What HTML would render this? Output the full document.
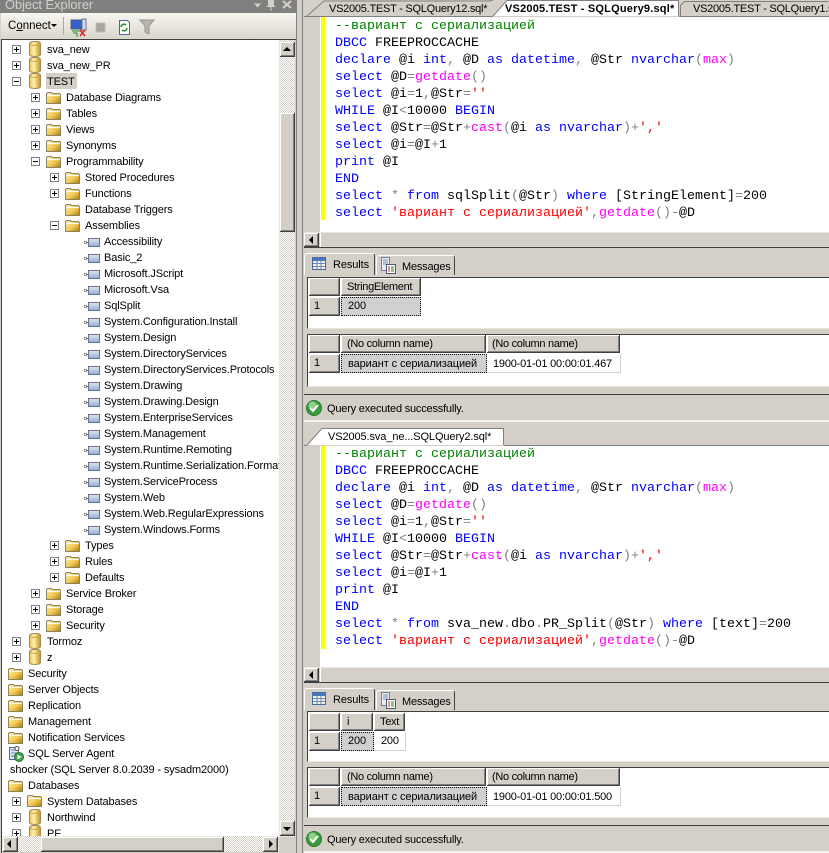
<!DOCTYPE html>
<html><head><meta charset="utf-8"><title>Object Explorer</title>
<style>
html,body{margin:0;padding:0;width:829px;height:853px;overflow:hidden;background:#d4d0c8}
body{position:relative;font:11px/16px "Liberation Sans","Noto Sans CJK SC",sans-serif;color:#000}
.a,.r,.r>*,.l,.b{position:absolute;display:block}
.b{background:#d4d0c8;box-shadow:inset -1px -1px #404040,inset 1px 1px #fff,inset -2px -2px #808080;white-space:nowrap;overflow:hidden}
.d{position:absolute;background:repeating-conic-gradient(#d4d0c8 0 25%,#fff 0 50%) 0 0/2px 2px}
#tree{position:absolute;left:0;top:0;width:279px;height:836px;background:#fff;clip-path:inset(40px 0 0 2px);overflow:hidden}
.r{height:16px;white-space:nowrap;width:0}
.r svg{left:15px;top:0;width:16px;height:16px}
.w svg,.y svg,.u svg,.z svg{top:1px}
.r span{left:35px;top:1px;letter-spacing:-.13px}
.r i{left:0;top:4px;width:7px;height:7px;border:1px solid #808080;background:#fff}
.r i:before{content:"";position:absolute;left:1px;top:3px;width:5px;height:1px;background:#000}
.r i.p:after{content:"";position:absolute;left:3px;top:1px;width:1px;height:5px;background:#000}
.u{left:-7px}.v{left:12px}.w{left:31px}.y{left:50px}.z{left:69px}
.l{left:335px;font:13.333px/17px "Liberation Mono","Noto Sans CJK SC",monospace;white-space:pre;height:17px}
.k{color:#00f}.f{color:#f0f}.s{color:#f00}.c{color:#008000}.g{color:#808080}
.tt{position:absolute;white-space:nowrap;top:1px;line-height:16px}
.h{line-height:19px;padding-left:6px;box-sizing:border-box;letter-spacing:-.3px}
.cell{position:absolute;box-sizing:border-box;line-height:19px;padding-left:7px;white-space:nowrap;letter-spacing:-.1px}
.sel{background:#d0d0d0;outline:1px dotted #000;outline-offset:-1px}
.wh{background:#fff;border:1px solid #d4d0c8;border-width:0 1px 1px 0;line-height:20px;letter-spacing:-.2px}
.panel{position:absolute;left:307px;width:522px;background:#fff;border-top:1px solid #404040;border-left:1px solid #404040;border-bottom:1px solid #e8e6e0;box-sizing:border-box}
.tab{position:absolute;white-space:nowrap;box-sizing:border-box;background:#d4d0c8;border:1px solid #fff;border-bottom:0;border-right:1px solid #404040;border-radius:3px 3px 0 0}
.tab span{position:absolute;top:3px;letter-spacing:-.1px}
.tab svg{position:absolute;left:7px;top:3px}
.status{position:absolute;left:304px;width:525px;height:23px;background:#d4d0c8;line-height:23px}
.status span{position:absolute;left:23px;top:1px;letter-spacing:-.2px}
.status svg{position:absolute;left:2px;top:3px}
.tri{position:absolute;width:0;height:0;border-style:solid;border-color:transparent}
</style></head><body>
<svg width="0" height="0" style="position:absolute">
<defs>
<linearGradient id="gf" x1="0" y1="0" x2="1" y2="1"><stop offset="0" stop-color="#fff4b8"/><stop offset=".55" stop-color="#f2c850"/><stop offset="1" stop-color="#a87810"/></linearGradient>
<linearGradient id="gd" x1="0" y1="0" x2="1" y2="0"><stop offset="0" stop-color="#f0c850"/><stop offset=".4" stop-color="#fff0b0"/><stop offset="1" stop-color="#c89020"/></linearGradient>
<linearGradient id="ga" x1="0" y1="0" x2="0" y2="1"><stop offset="0" stop-color="#dde6f5"/><stop offset="1" stop-color="#94aad0"/></linearGradient>
<symbol id="f" viewBox="0 0 16 16"><path d="M.5 13.500V3.500l1-1h4l1 1h7l1 1v9z" fill="url(#gf)" stroke="#8a8460"/><path d="M1 5.500h13" stroke="#fff" /></symbol>
<symbol id="d" viewBox="0 0 16 16"><path d="M2.500 2.500c0-2.600 11-2.600 11 0v11c0 2.600-11 2.600-11 0z" fill="url(#gd)" stroke="#a08a50"/><path d="M3 3.500c2 1.200 8 1.200 10 0" fill="none" stroke="#c8a040"/></symbol>
<symbol id="x" viewBox="0 0 16 16"><path d="M0 8.500h4" stroke="#707070"/><circle cx="1.500" cy="8.500" r="1.300" fill="#fff" stroke="#606060" stroke-width=".7"/><path d="M3.500 8.500l1.500-1.500v3z" fill="#505050"/><rect x="4.500" y="4.500" width="11" height="8" fill="url(#ga)" stroke="#68748c"/></symbol>
<symbol id="ok" viewBox="0 0 16 16"><circle cx="8" cy="8" r="7.500" fill="#3a9a3c" stroke="#2a7a30"/><circle cx="6.500" cy="5.500" r="4" fill="#8ed088"/><path d="M4 8l3 3 5-6" fill="none" stroke="#fff" stroke-width="2"/></symbol>
<symbol id="gr" viewBox="0 0 14 13"><rect x=".5" y=".5" width="13" height="12" fill="#f4f0e0" stroke="#4a6aa0"/><rect x="1" y="1" width="12" height="3" fill="#4a78c0"/><path d="M1 6.500h12M1 9.500h12M5 4v8M9 4v8" stroke="#6a8ac0"/></symbol>
<symbol id="ms" viewBox="0 0 15 17"><rect x=".5" y=".5" width="8" height="13" fill="#e8ecf4" stroke="#7080a0"/><path d="M2 3h5M2 5h5M2 7h5" stroke="#8090b0"/><rect x="5.500" y="7.500" width="9" height="9" fill="#fff" stroke="#505870"/><path d="M7 10h2M7 12h2M7 14h2" stroke="#c03020"/><path d="M10 10h3M10 12h3M10 14h3" stroke="#20803a"/></symbol>
</defs></svg>

<!-- Object Explorer title + toolbar -->
<div class="a" style="left:0;top:0;width:296px;height:13px;background:#808080"></div>
<div class="a" style="left:5px;top:-3px;font-size:12.800px;line-height:16px;color:#d4d0c8;white-space:nowrap">Object Explorer</div>
<svg class="a" style="left:250px;top:0" width="46" height="12"><path d="M4 3.500h7l-3.500 4z" fill="#d4d0c8"/><path d="M18 0h6v5l1.500 2h-4v4h-1V7h-4l1.500-2z" fill="#d4d0c8"/><path d="M33 1l8 7M41 1l-8 7" stroke="#d4d0c8" stroke-width="2"/></svg>
<div class="a" style="left:1px;top:13px;width:295px;height:27px;background:linear-gradient(#f7f6f1,#d8d5ca)"></div>
<div class="a" style="left:8px;top:18px;font-size:11.500px;white-space:nowrap">C<u>o</u>nnect</div>
<div class="tri" style="left:51px;top:24px;border-width:3px 3px 0;border-top-color:#000"></div>
<div class="a" style="left:63px;top:17px;width:1px;height:18px;background:#aaa79c"></div>
<svg class="a" style="left:69px;top:17px" width="90" height="20">
<rect x="2" y="3" width="11" height="9" fill="#3060c8" stroke="#506080"/><rect x="13" y="2" width="4" height="11" fill="#d8dce8" stroke="#607090"/><path d="M3 14h8M4 16h4v4" stroke="#209030" fill="none"/><path d="M11 13l5 6M16 13l-5 6" stroke="#e02020" stroke-width="1.500"/>
<rect x="27" y="6" width="9" height="9" fill="#a8a59c" stroke="#c0bdb4"/>
<path d="M50.500 3.500h8l2 2v12h-10z" fill="#f8f8f8" stroke="#506890"/><path d="M52 10a3 3 0 0 1 5-2M58 11a3 3 0 0 1-5 2" stroke="#209030" fill="none" stroke-width="1.500"/>
<path d="M71 3h14l-5 6v8l-4-2V9z" fill="#b8b5ac" stroke="#989590"/>
</svg>

<!-- Tree -->
<div class="a" style="left:1px;top:39px;width:1px;height:814px;background:#404040"></div>
<div class="a" style="left:1px;top:39px;width:295px;height:1px;background:#404040"></div>
<div id="tree">
<div class="r v" style="top:41px"><i class="p"></i><svg><use href="#d"/></svg><span>sva_new</span></div>
<div class="r v" style="top:57px"><i class="p"></i><svg><use href="#d"/></svg><span>sva_new_PR</span></div>
<div class="a" style="left:46px;top:73px;width:31px;height:16px;background:#d4d0c8"></div>
<div class="r v" style="top:73px"><i></i><svg><use href="#d"/></svg><span>TEST</span></div>
<div class="r w" style="top:89px"><i class="p"></i><svg><use href="#f"/></svg><span>Database Diagrams</span></div>
<div class="r w" style="top:105px"><i class="p"></i><svg><use href="#f"/></svg><span>Tables</span></div>
<div class="r w" style="top:121px"><i class="p"></i><svg><use href="#f"/></svg><span>Views</span></div>
<div class="r w" style="top:137px"><i class="p"></i><svg><use href="#f"/></svg><span>Synonyms</span></div>
<div class="r w" style="top:153px"><i></i><svg><use href="#f"/></svg><span>Programmability</span></div>
<div class="r y" style="top:169px"><i class="p"></i><svg><use href="#f"/></svg><span>Stored Procedures</span></div>
<div class="r y" style="top:185px"><i class="p"></i><svg><use href="#f"/></svg><span>Functions</span></div>
<div class="r y" style="top:201px"><svg><use href="#f"/></svg><span>Database Triggers</span></div>
<div class="r y" style="top:217px"><i></i><svg><use href="#f"/></svg><span>Assemblies</span></div>
<div class="r z" style="top:233px"><svg><use href="#x"/></svg><span>Accessibility</span></div>
<div class="r z" style="top:249px"><svg><use href="#x"/></svg><span>Basic_2</span></div>
<div class="r z" style="top:265px"><svg><use href="#x"/></svg><span>Microsoft.JScript</span></div>
<div class="r z" style="top:281px"><svg><use href="#x"/></svg><span>Microsoft.Vsa</span></div>
<div class="r z" style="top:297px"><svg><use href="#x"/></svg><span>SqlSplit</span></div>
<div class="r z" style="top:313px"><svg><use href="#x"/></svg><span>System.Configuration.Install</span></div>
<div class="r z" style="top:329px"><svg><use href="#x"/></svg><span>System.Design</span></div>
<div class="r z" style="top:345px"><svg><use href="#x"/></svg><span>System.DirectoryServices</span></div>
<div class="r z" style="top:361px"><svg><use href="#x"/></svg><span>System.DirectoryServices.Protocols</span></div>
<div class="r z" style="top:377px"><svg><use href="#x"/></svg><span>System.Drawing</span></div>
<div class="r z" style="top:393px"><svg><use href="#x"/></svg><span>System.Drawing.Design</span></div>
<div class="r z" style="top:409px"><svg><use href="#x"/></svg><span>System.EnterpriseServices</span></div>
<div class="r z" style="top:425px"><svg><use href="#x"/></svg><span>System.Management</span></div>
<div class="r z" style="top:441px"><svg><use href="#x"/></svg><span>System.Runtime.Remoting</span></div>
<div class="r z" style="top:457px"><svg><use href="#x"/></svg><span>System.Runtime.Serialization.Formatters.Soap</span></div>
<div class="r z" style="top:473px"><svg><use href="#x"/></svg><span>System.ServiceProcess</span></div>
<div class="r z" style="top:489px"><svg><use href="#x"/></svg><span>System.Web</span></div>
<div class="r z" style="top:505px"><svg><use href="#x"/></svg><span>System.Web.RegularExpressions</span></div>
<div class="r z" style="top:521px"><svg><use href="#x"/></svg><span>System.Windows.Forms</span></div>
<div class="r y" style="top:537px"><i class="p"></i><svg><use href="#f"/></svg><span>Types</span></div>
<div class="r y" style="top:553px"><i class="p"></i><svg><use href="#f"/></svg><span>Rules</span></div>
<div class="r y" style="top:569px"><i class="p"></i><svg><use href="#f"/></svg><span>Defaults</span></div>
<div class="r w" style="top:585px"><i class="p"></i><svg><use href="#f"/></svg><span>Service Broker</span></div>
<div class="r w" style="top:601px"><i class="p"></i><svg><use href="#f"/></svg><span>Storage</span></div>
<div class="r w" style="top:617px"><i class="p"></i><svg><use href="#f"/></svg><span>Security</span></div>
<div class="r v" style="top:633px"><i class="p"></i><svg><use href="#d"/></svg><span>Tormoz</span></div>
<div class="r v" style="top:649px"><i class="p"></i><svg><use href="#d"/></svg><span>z</span></div>
<div class="r u" style="top:665px"><svg><use href="#f"/></svg><span>Security</span></div>
<div class="r u" style="top:681px"><svg><use href="#f"/></svg><span>Server Objects</span></div>
<div class="r u" style="top:697px"><svg><use href="#f"/></svg><span>Replication</span></div>
<div class="r u" style="top:713px"><svg><use href="#f"/></svg><span>Management</span></div>
<div class="r u" style="top:729px"><svg><use href="#f"/></svg><span>Notification Services</span></div>
<div class="r u" style="top:745px"><svg viewBox="0 0 16 16"><rect x="1.500" y="1.500" width="9" height="12" fill="#dfe6f2" stroke="#506890"/><path d="M3 4h6M3 7h6M3 10h4" stroke="#6080b0"/><circle cx="9" cy="2.500" r="2" fill="#fff" stroke="#505050"/><circle cx="11" cy="11" r="4.500" fill="#40a848" stroke="#207030"/><path d="M9.500 8.500l4 2.500-4 2.500z" fill="#fff"/></svg><span>SQL Server Agent</span></div>
<div class="r" style="left:0;top:761px"><span style="left:10px">shocker (SQL Server 8.0.2039 - sysadm2000)</span></div>
<div class="r u" style="top:777px"><svg><use href="#f"/></svg><span>Databases</span></div>
<div class="r v" style="top:793px"><i class="p"></i><svg><use href="#f"/></svg><span>System Databases</span></div>
<div class="r v" style="top:809px"><i class="p"></i><svg><use href="#d"/></svg><span>Northwind</span></div>
<div class="r v" style="top:825px"><i class="p"></i><svg><use href="#d"/></svg><span>PF</span></div>
</div>

<!-- Tree vertical scrollbar -->
<div class="d" style="left:279px;top:40px;width:16px;height:797px"></div>
<div class="b" style="left:280px;top:42px;width:15px;height:15px"></div>
<div class="tri" style="left:283px;top:47px;border-width:0 4px 4px;border-bottom-color:#000"></div>
<div class="b" style="left:280px;top:113px;width:15px;height:119px"></div>
<div class="b" style="left:280px;top:821px;width:15px;height:15px"></div>
<div class="tri" style="left:283px;top:827px;border-width:4px 4px 0;border-top-color:#000"></div>
<!-- Tree horizontal scrollbar -->
<div class="d" style="left:2px;top:836px;width:277px;height:16px"></div>
<div class="b" style="left:3px;top:837px;width:15px;height:15px"></div>
<div class="tri" style="left:7px;top:840px;border-width:4px 4px 4px 0;border-right-color:#000"></div>
<div class="b" style="left:41px;top:837px;width:183px;height:15px"></div>
<div class="b" style="left:263px;top:837px;width:15px;height:15px"></div>
<div class="tri" style="left:269px;top:840px;border-width:4px 0 4px 4px;border-left-color:#000"></div>
<div class="a" style="left:296px;top:0;width:1px;height:853px;background:#808080"></div>

<!-- Top editor tabs -->
<div class="a" style="left:302px;top:0;width:1px;height:853px;background:#808080"></div>
<svg class="a" style="left:304px;top:0" width="525" height="17">
<path d="M3 16L20 1h165l4-1" fill="none" stroke="#808080"/>
<path d="M189 16L203 0h172v16" fill="#fff"/>
<path d="M189 16L203 .5h171.500V16" fill="none" stroke="#808080"/>
<path d="M0 16.500h189M375 16.500h150" stroke="#808080"/>
<path d="M376.500 16V5.500l4-4h144" fill="none" stroke="#808080"/>
</svg>
<div class="tt" style="left:329px;letter-spacing:-.25px">VS2005.TEST - SQLQuery12.sql*</div>
<div class="tt" style="left:505px;font-weight:bold;letter-spacing:.2px">VS2005.TEST - SQLQuery9.sql*</div>
<div class="tt" style="left:693px;letter-spacing:-.25px">VS2005.TEST - SQLQuery1.sql*</div>

<!-- Editor 1 -->
<div class="a" style="left:304px;top:17px;width:525px;height:216px;background:#fff"></div>
<div class="a" style="left:304px;top:17px;width:16px;height:216px;background:#d4d0c8"></div>
<div class="a" style="left:321px;top:17px;width:4px;height:203px;background:#ff0"></div>
<div class="l" style="top:18px"><span class="c">--вариант с сериализацией</span></div>
<div class="l" style="top:35px"><span class="k">DBCC</span> FREEPROCCACHE</div>
<div class="l" style="top:52px"><span class="k">declare</span> @i <span class="k">int</span><span class="g">,</span> @D <span class="k">as</span> <span class="k">datetime</span><span class="g">,</span> @Str <span class="k">nvarchar</span><span class="g">(</span><span class="f">max</span><span class="g">)</span></div>
<div class="l" style="top:69px"><span class="k">select</span> @D<span class="g">=</span><span class="f">getdate</span><span class="g">()</span></div>
<div class="l" style="top:86px"><span class="k">select</span> @i<span class="g">=</span>1<span class="g">,</span>@Str<span class="g">=</span><span class="s">''</span></div>
<div class="l" style="top:103px"><span class="k">WHILE</span> @I<span class="g">&lt;</span>10000 <span class="k">BEGIN</span></div>
<div class="l" style="top:120px"><span class="k">select</span> @Str<span class="g">=</span>@Str<span class="g">+</span><span class="f">cast</span><span class="g">(</span>@i <span class="k">as</span> <span class="k">nvarchar</span><span class="g">)+</span><span class="s">','</span></div>
<div class="l" style="top:137px"><span class="k">select</span> @i<span class="g">=</span>@I<span class="g">+</span>1</div>
<div class="l" style="top:154px"><span class="k">print</span> @I</div>
<div class="l" style="top:171px"><span class="k">END</span></div>
<div class="l" style="top:188px"><span class="k">select</span> <span class="g">*</span> <span class="k">from</span> sqlSplit<span class="g">(</span>@Str<span class="g">)</span> <span class="k">where</span> [StringElement]<span class="g">=</span>200</div>
<div class="l" style="top:205px"><span class="k">select</span> <span class="s">'вариант с сериализацией'</span><span class="g">,</span><span class="f">getdate</span><span class="g">()-</span>@D</div>
<div class="a" style="left:304px;top:232px;width:525px;height:1px;background:#e8e6e0"></div>
<div class="b" style="left:304px;top:233px;width:15px;height:14px"></div>
<div class="tri" style="left:309px;top:236px;border-width:4px 4px 4px 0;border-right-color:#000"></div>
<div class="a" style="left:320px;top:233px;width:509px;height:14px;background:#d4d0c8;border-left:1px solid #fff"></div>
<div class="a" style="left:304px;top:247px;width:525px;height:1px;background:#404040"></div>

<!-- Results 1 -->
<div class="tab" style="left:304px;top:253px;width:71px;height:22px;z-index:2"><svg width="14" height="13"><use href="#gr"/></svg><span style="left:28px">Results</span></div>
<div class="tab" style="left:376px;top:255px;width:79px;height:20px"><svg width="15" height="17" style="left:4px;top:1px"><use href="#ms"/></svg><span style="left:25px;top:3px;letter-spacing:-.2px">Messages</span></div>
<div class="panel" style="top:277px;height:52px"></div>
<div class="b" style="left:309px;top:278px;width:31px;height:18px"></div>
<div class="b h" style="left:341px;top:278px;width:80px;height:18px">StringElement</div>
<div class="b h" style="left:309px;top:297px;width:31px;height:19px;padding-left:5px">1</div>
<div class="cell sel" style="left:341px;top:297px;width:80px;height:19px">200</div>
<div class="panel" style="top:334px;height:53px"></div>
<div class="b" style="left:309px;top:335px;width:31px;height:18px"></div>
<div class="b h" style="left:341px;top:335px;width:145px;height:18px">(No column name)</div>
<div class="b h" style="left:487px;top:335px;width:133px;height:18px;padding-left:5px">(No column name)</div>
<div class="b h" style="left:309px;top:354px;width:31px;height:19px;padding-left:5px">1</div>
<div class="cell sel" style="left:341px;top:354px;width:146px;height:19px;line-height:20px">вариант с сериализацией</div>
<div class="cell wh" style="left:487px;top:354px;width:134px;height:19px;padding-left:6px">1900-01-01 00:00:01.467</div>
<div class="a" style="left:304px;top:394px;width:525px;height:1px;background:#404040"></div>
<div class="status" style="top:397px"><svg width="16" height="16"><use href="#ok"/></svg><span>Query executed successfully.</span></div>
<div class="a" style="left:304px;top:420px;width:525px;height:2px;background:#f4f3ef"></div>

<!-- Editor 2 tab -->
<svg class="a" style="left:304px;top:428px" width="525" height="18">
<path d="M3 17L18 1h181v16z" fill="#fff"/>
<path d="M3 17L18 .5h181.500V17" fill="none" stroke="#808080"/>
<path d="M0 17.500h3M200 17.500h325" stroke="#808080"/>
</svg>
<div class="tt" style="left:328px;top:429px;letter-spacing:-.1px">VS2005.sva_ne...SQLQuery2.sql*</div>

<!-- Editor 2 -->
<div class="a" style="left:304px;top:446px;width:525px;height:222px;background:#fff"></div>
<div class="a" style="left:304px;top:446px;width:16px;height:222px;background:#d4d0c8"></div>
<div class="a" style="left:321px;top:446px;width:4px;height:203px;background:#ff0"></div>
<div class="l" style="top:446px"><span class="c">--вариант с сериализацией</span></div>
<div class="l" style="top:463px"><span class="k">DBCC</span> FREEPROCCACHE</div>
<div class="l" style="top:480px"><span class="k">declare</span> @i <span class="k">int</span><span class="g">,</span> @D <span class="k">as</span> <span class="k">datetime</span><span class="g">,</span> @Str <span class="k">nvarchar</span><span class="g">(</span><span class="f">max</span><span class="g">)</span></div>
<div class="l" style="top:497px"><span class="k">select</span> @D<span class="g">=</span><span class="f">getdate</span><span class="g">()</span></div>
<div class="l" style="top:514px"><span class="k">select</span> @i<span class="g">=</span>1<span class="g">,</span>@Str<span class="g">=</span><span class="s">''</span></div>
<div class="l" style="top:531px"><span class="k">WHILE</span> @I<span class="g">&lt;</span>10000 <span class="k">BEGIN</span></div>
<div class="l" style="top:548px"><span class="k">select</span> @Str<span class="g">=</span>@Str<span class="g">+</span><span class="f">cast</span><span class="g">(</span>@i <span class="k">as</span> <span class="k">nvarchar</span><span class="g">)+</span><span class="s">','</span></div>
<div class="l" style="top:565px"><span class="k">select</span> @i<span class="g">=</span>@I<span class="g">+</span>1</div>
<div class="l" style="top:582px"><span class="k">print</span> @I</div>
<div class="l" style="top:599px"><span class="k">END</span></div>
<div class="l" style="top:616px"><span class="k">select</span> <span class="g">*</span> <span class="k">from</span> sva_new<span class="g">.</span>dbo<span class="g">.</span>PR_Split<span class="g">(</span>@Str<span class="g">)</span> <span class="k">where</span> [text]<span class="g">=</span>200</div>
<div class="l" style="top:633px"><span class="k">select</span> <span class="s">'вариант с сериализацией'</span><span class="g">,</span><span class="f">getdate</span><span class="g">()-</span>@D</div>
<div class="a" style="left:304px;top:667px;width:525px;height:1px;background:#e8e6e0"></div>
<div class="b" style="left:304px;top:668px;width:15px;height:14px"></div>
<div class="tri" style="left:309px;top:671px;border-width:4px 4px 4px 0;border-right-color:#000"></div>
<div class="a" style="left:320px;top:668px;width:509px;height:14px;background:#d4d0c8;border-left:1px solid #fff"></div>
<div class="a" style="left:304px;top:682px;width:525px;height:1px;background:#404040"></div>

<!-- Results 2 -->
<div class="tab" style="left:304px;top:688px;width:71px;height:22px;z-index:2"><svg width="14" height="13"><use href="#gr"/></svg><span style="left:28px">Results</span></div>
<div class="tab" style="left:376px;top:690px;width:79px;height:20px"><svg width="15" height="17" style="left:4px;top:1px"><use href="#ms"/></svg><span style="left:25px;top:3px;letter-spacing:-.2px">Messages</span></div>
<div class="panel" style="top:711px;height:51px"></div>
<div class="b" style="left:309px;top:713px;width:31px;height:18px"></div>
<div class="b h" style="left:341px;top:713px;width:32px;height:18px">i</div>
<div class="b h" style="left:374px;top:713px;width:31px;height:18px;padding-left:6px">Text</div>
<div class="b h" style="left:309px;top:732px;width:31px;height:19px;padding-left:5px">1</div>
<div class="cell sel" style="left:341px;top:732px;width:33px;height:19px">200</div>
<div class="cell wh" style="left:374px;top:732px;width:32px;height:19px;padding-left:7px;line-height:19px">200</div>
<div class="panel" style="top:767px;height:51px"></div>
<div class="b" style="left:309px;top:768px;width:31px;height:18px"></div>
<div class="b h" style="left:341px;top:768px;width:145px;height:18px">(No column name)</div>
<div class="b h" style="left:487px;top:768px;width:133px;height:18px;padding-left:5px">(No column name)</div>
<div class="b h" style="left:309px;top:787px;width:31px;height:19px;padding-left:5px">1</div>
<div class="cell sel" style="left:341px;top:787px;width:146px;height:19px;line-height:20px">вариант с сериализацией</div>
<div class="cell wh" style="left:487px;top:787px;width:134px;height:19px;padding-left:6px">1900-01-01 00:00:01.500</div>
<div class="a" style="left:304px;top:825px;width:525px;height:1px;background:#404040"></div>
<div class="status" style="top:828px"><svg width="16" height="16"><use href="#ok"/></svg><span>Query executed successfully.</span></div>
<div class="a" style="left:304px;top:851px;width:525px;height:2px;background:#f4f3ef"></div>
</body></html>
